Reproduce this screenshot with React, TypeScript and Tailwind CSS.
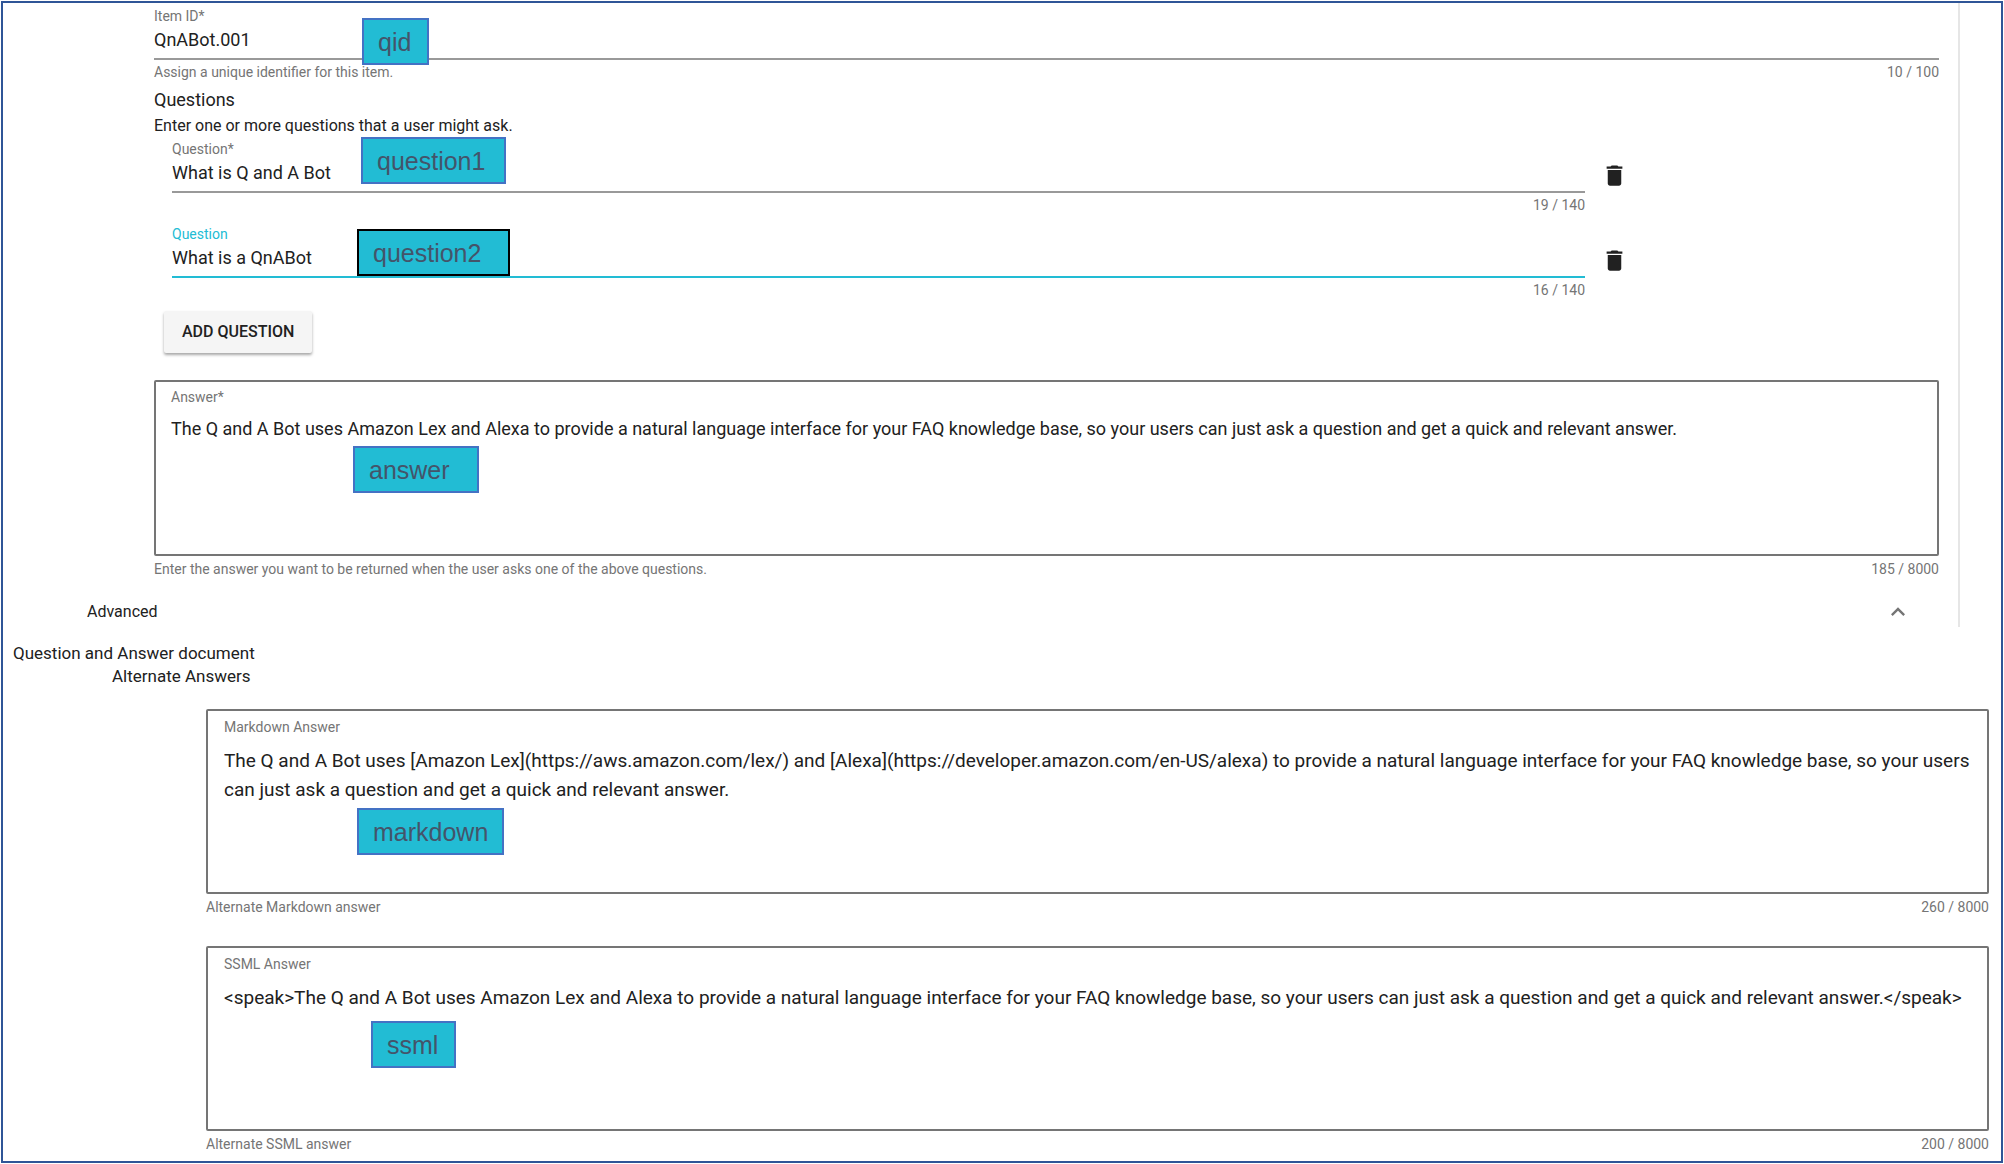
import { useId, useState } from "react";
import { MdDelete, MdExpandLess } from "react-icons/md";

const ANSWER =
  "The Q and A Bot uses Amazon Lex and Alexa to provide a natural language interface for your FAQ knowledge base, so your users can just ask a question and get a quick and relevant answer.";
const MARKDOWN =
  "The Q and A Bot uses [Amazon Lex](https://aws.amazon.com/lex/) and [Alexa](https://developer.amazon.com/en-US/alexa) to provide a natural language interface for your FAQ knowledge base, so your users can just ask a question and get a quick and relevant answer.";
const SSML = `<speak>${ANSWER}</speak>`;

// Callout naming the JSON key that a field maps to; `className` places it over the field.
function Callout({ text, className }: { text: string; className: string }) {
  return (
    <div
      className={`pointer-events-none absolute h-[47px] border-2 bg-[#22bcd4] pl-[14px] font-['Liberation_Sans',Arial,sans-serif] text-[25px] leading-[44px] text-[#44546a] ${className}`}
    >
      {text}
    </div>
  );
}

function LineField({
  label,
  value,
  hint,
  counter,
  active = false,
}: {
  label: string;
  value: string;
  hint?: string;
  counter: string;
  active?: boolean;
}) {
  const id = useId();
  const [text, setText] = useState(value);
  return (
    <div>
      <label
        htmlFor={id}
        className={`block text-[14px] leading-[18px] ${active ? "text-[#22bcd4]" : "text-[#757575]"}`}
      >
        {label}
      </label>
      <input
        id={id}
        value={text}
        onChange={(e) => setText(e.target.value)}
        className={`block h-[35px] w-full border-b-2 bg-transparent pb-1 text-[18px] text-[#212121] outline-none ${
          active ? "border-[#22bcd4]" : "border-[#999999]"
        }`}
      />
      <div className="mt-[3px] flex justify-between text-[14px] leading-[18px] text-[#757575]">
        <span>{hint}</span>
        <span>{counter}</span>
      </div>
    </div>
  );
}

function BoxField({
  label,
  value,
  hint,
  counter,
  large = false,
}: {
  label: string;
  value: string;
  hint: string;
  counter: string;
  large?: boolean;
}) {
  const id = useId();
  const [text, setText] = useState(value);
  return (
    <div className="text-[14px] leading-[18px]">
      <div className={`rounded-xs border-2 border-[#757575] ${large ? "pt-[7px] pl-4" : "pt-[6px] pl-[15px]"}`}>
        <label htmlFor={id} className="block text-[#757575]">
          {label}
        </label>
        <textarea
          id={id}
          value={text}
          onChange={(e) => setText(e.target.value)}
          className={`block w-full resize-none overflow-hidden bg-transparent text-[#212121] outline-none ${
            large
              ? "h-[156px] pt-[10px] text-[19px] leading-[29px]"
              : "h-[148px] pt-[9px] text-[18px] leading-[28px]"
          }`}
        />
      </div>
      <div className="mt-1 flex justify-between text-[#757575]">
        <span>{hint}</span>
        <span>{counter}</span>
      </div>
    </div>
  );
}

function QuestionRow(props: { label: string; value: string; counter: string; active?: boolean }) {
  return (
    <div className="flex items-start">
      <div className="flex-1">
        <LineField {...props} />
      </div>
      <div className="w-[354px] pt-[22px] pl-4">
        <button type="button" aria-label="Delete question" className="block text-[#212121]">
          <MdDelete size={27} />
        </button>
      </div>
    </div>
  );
}

export default function App() {
  return (
    <div className="flex min-h-screen flex-col bg-white p-px font-[Roboto,sans-serif] text-[#212121]">
      <main className="flex-1 border-2 border-[#2f5597]">
        <section className="mr-[41px] border-r-2 border-[#e6e6e6] pt-1 pb-[3px]">
          <div className="mr-[19px] ml-[151px]">
            <div className="relative">
              <LineField
                label="Item ID*"
                value="QnABot.001"
                hint="Assign a unique identifier for this item."
                counter="10 / 100"
              />
              <Callout text="qid" className="top-[11px] left-[208px] w-[67px] border-[#4472c4]" />
            </div>

            <h2 className="mt-[7px] text-[18px] leading-6">Questions</h2>
            <p className="mt-1 text-[16px] leading-5">Enter one or more questions that a user might ask.</p>

            <div className="mt-1 ml-[18px] flex flex-col gap-[11px]">
              <div className="relative">
                <QuestionRow label="Question*" value="What is Q and A Bot" counter="19 / 140" />
                <Callout text="question1" className="-top-[3px] left-[189px] w-[145px] border-[#4472c4]" />
              </div>
              <div className="relative">
                <QuestionRow label="Question" value="What is a QnABot" counter="16 / 140" active />
                <Callout text="question2" className="top-1 left-[185px] w-[153px] border-black" />
              </div>
            </div>

            <button
              type="button"
              className="mt-3 ml-[10px] block h-[42px] rounded-xs bg-[#f5f5f5] px-[18px] text-[16px] font-medium shadow-[0_2px_3px_rgba(0,0,0,0.35)]"
            >
              ADD QUESTION
            </button>

            <div className="relative mt-[27px]">
              <BoxField
                label="Answer*"
                value={ANSWER}
                hint="Enter the answer you want to be returned when the user asks one of the above questions."
                counter="185 / 8000"
              />
              <Callout text="answer" className="top-[66px] left-[199px] w-[126px] border-[#4472c4]" />
            </div>
          </div>

          <button
            type="button"
            aria-expanded="true"
            className="mt-[22px] flex h-6 w-full items-center justify-between pr-[46px] pl-[84px] text-[16px]"
          >
            Advanced
            <MdExpandLess size={28} className="text-[#757575]" />
          </button>
        </section>

        <section className="mt-[14px] pr-3 pl-[10px]">
          <h2 className="text-[17px] leading-6">Question and Answer document</h2>
          <h3 className="ml-[99px] text-[17px] leading-[23px]">Alternate Answers</h3>
          <div className="mt-[21px] ml-[193px] flex flex-col gap-[30px]">
            <div className="relative">
              <BoxField
                large
                label="Markdown Answer"
                value={MARKDOWN}
                hint="Alternate Markdown answer"
                counter="260 / 8000"
              />
              <Callout text="markdown" className="top-[99px] left-[151px] w-[147px] border-[#4472c4]" />
            </div>
            <div className="relative">
              <BoxField
                large
                label="SSML Answer"
                value={SSML}
                hint="Alternate SSML answer"
                counter="200 / 8000"
              />
              <Callout text="ssml" className="top-[75px] left-[165px] w-[85px] border-[#4472c4]" />
            </div>
          </div>
        </section>
      </main>
    </div>
  );
}
